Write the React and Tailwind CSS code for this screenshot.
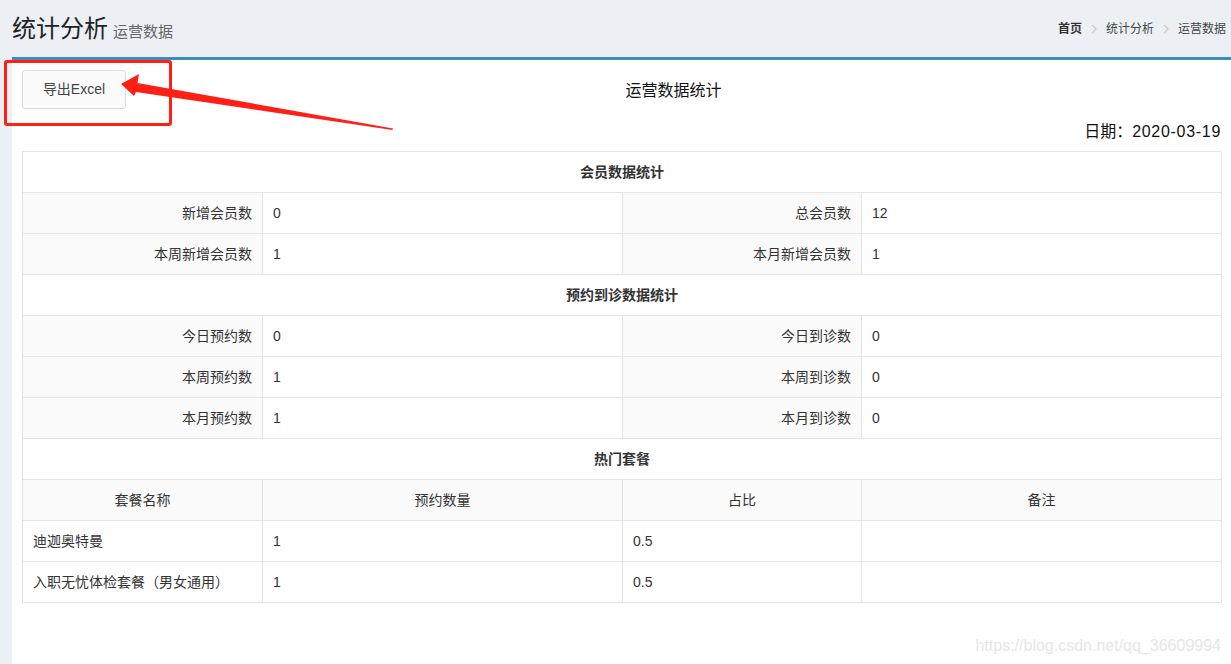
import React from "react";

const FONT = { fontFamily: '"Liberation Sans", "Noto Sans CJK SC", sans-serif' };

function Chevron() {
  return (
    <svg width="6" height="10" viewBox="0 0 6 10" className="mx-[9px]">
      <polyline points="1,1 5,5 1,9" fill="none" stroke="#c8c8c8" strokeWidth="1.2" />
    </svg>
  );
}

const cell = "h-[41px] border-r border-b border-[#e4e4e4] flex items-center text-[14px] text-[#333]";

function SectionHead({ children }) {
  return (
    <div className={`${cell} col-span-4 justify-center font-bold bg-white`}>{children}</div>
  );
}

function Label({ children }) {
  return <div className={`${cell} justify-end pr-[10px] bg-[#fafafa]`}>{children}</div>;
}

function Value({ children }) {
  return <div className={`${cell} pl-[10px] bg-white`}>{children}</div>;
}

function PairRow({ a, av, b, bv }) {
  return (
    <>
      <Label>{a}</Label>
      <Value>{av}</Value>
      <Label>{b}</Label>
      <Value>{bv}</Value>
    </>
  );
}

export default function App() {
  return (
    <div className="relative w-[1231px] h-[664px] overflow-hidden bg-[#ecf0f5]" style={FONT}>
      {/* header */}
      <div className="h-[57px] flex items-center justify-between pl-[12px] pr-[5px]">
        <div className="flex items-end pt-[1px]">
          <span className="text-[24px] leading-[30px] text-[#222]">统计分析</span>
          <span className="text-[15px] leading-[22px] text-[#666] ml-[5px] mb-[1px]">运营数据</span>
        </div>
        <div className="flex items-center text-[12px] text-[#444]">
          <span className="font-bold text-[#333]">首页</span>
          <Chevron />
          <span>统计分析</span>
          <Chevron />
          <span>运营数据</span>
        </div>
      </div>

      {/* box */}
      <div className="ml-[12px] h-[607px] bg-white border-t-[3px] border-[#3c8dbc] px-[10px] pt-[10px]">
        <div className="flex items-center">
          <button className="w-[104px] h-[39px] rounded-[3px] border border-[#dcdcdc] bg-[#fbfbfb] text-[14px] text-[#444]">
            导出Excel
          </button>
          <div className="flex-1 text-center text-[16px] text-[#111] leading-[22px] pt-[2px]">运营数据统计</div>
        </div>
        <div className="mt-[12px] h-[22px] text-right text-[16px] leading-[22px] text-[#111]">
          日期：<span className="tracking-[0.7px]">2020-03-19</span>
        </div>

        <div className="mt-[8px] grid grid-cols-[240px_360px_239px_360px] border-l border-t border-[#e4e4e4]">
          <SectionHead>会员数据统计</SectionHead>
          <PairRow a="新增会员数" av="0" b="总会员数" bv="12" />
          <PairRow a="本周新增会员数" av="1" b="本月新增会员数" bv="1" />
          <SectionHead>预约到诊数据统计</SectionHead>
          <PairRow a="今日预约数" av="0" b="今日到诊数" bv="0" />
          <PairRow a="本周预约数" av="1" b="本周到诊数" bv="0" />
          <PairRow a="本月预约数" av="1" b="本月到诊数" bv="0" />
          <SectionHead>热门套餐</SectionHead>
          <div className={`${cell} justify-center bg-[#fafafa]`}>套餐名称</div>
          <div className={`${cell} justify-center bg-[#fafafa]`}>预约数量</div>
          <div className={`${cell} justify-center bg-[#fafafa]`}>占比</div>
          <div className={`${cell} justify-center bg-[#fafafa]`}>备注</div>
          <Value>迪迦奥特曼</Value>
          <Value>1</Value>
          <Value>0.5</Value>
          <Value></Value>
          <Value>入职无忧体检套餐（男女通用）</Value>
          <Value>1</Value>
          <Value>0.5</Value>
          <Value></Value>
        </div>
      </div>

      {/* annotation: red rectangle */}
      <div className="absolute left-[4px] top-[60px] w-[168px] h-[66px] border-[3px] border-[#fe2016] rounded-[3px] pointer-events-none" />
      {/* annotation: arrow */}
      <svg className="absolute left-0 top-0 pointer-events-none" width="420" height="140" viewBox="0 0 420 140">
        <polygon
          points="121,84 139,74 137.5,83 393,128.5 392.5,130 136,92 134,96"
          fill="#fe2016"
        />
      </svg>

      {/* watermark */}
      <div className="absolute right-[10px] top-[635px] text-[16px] leading-[22px] text-[#e6e6e6]">
        https://blog.csdn.net/qq_36609994
      </div>
    </div>
  );
}
